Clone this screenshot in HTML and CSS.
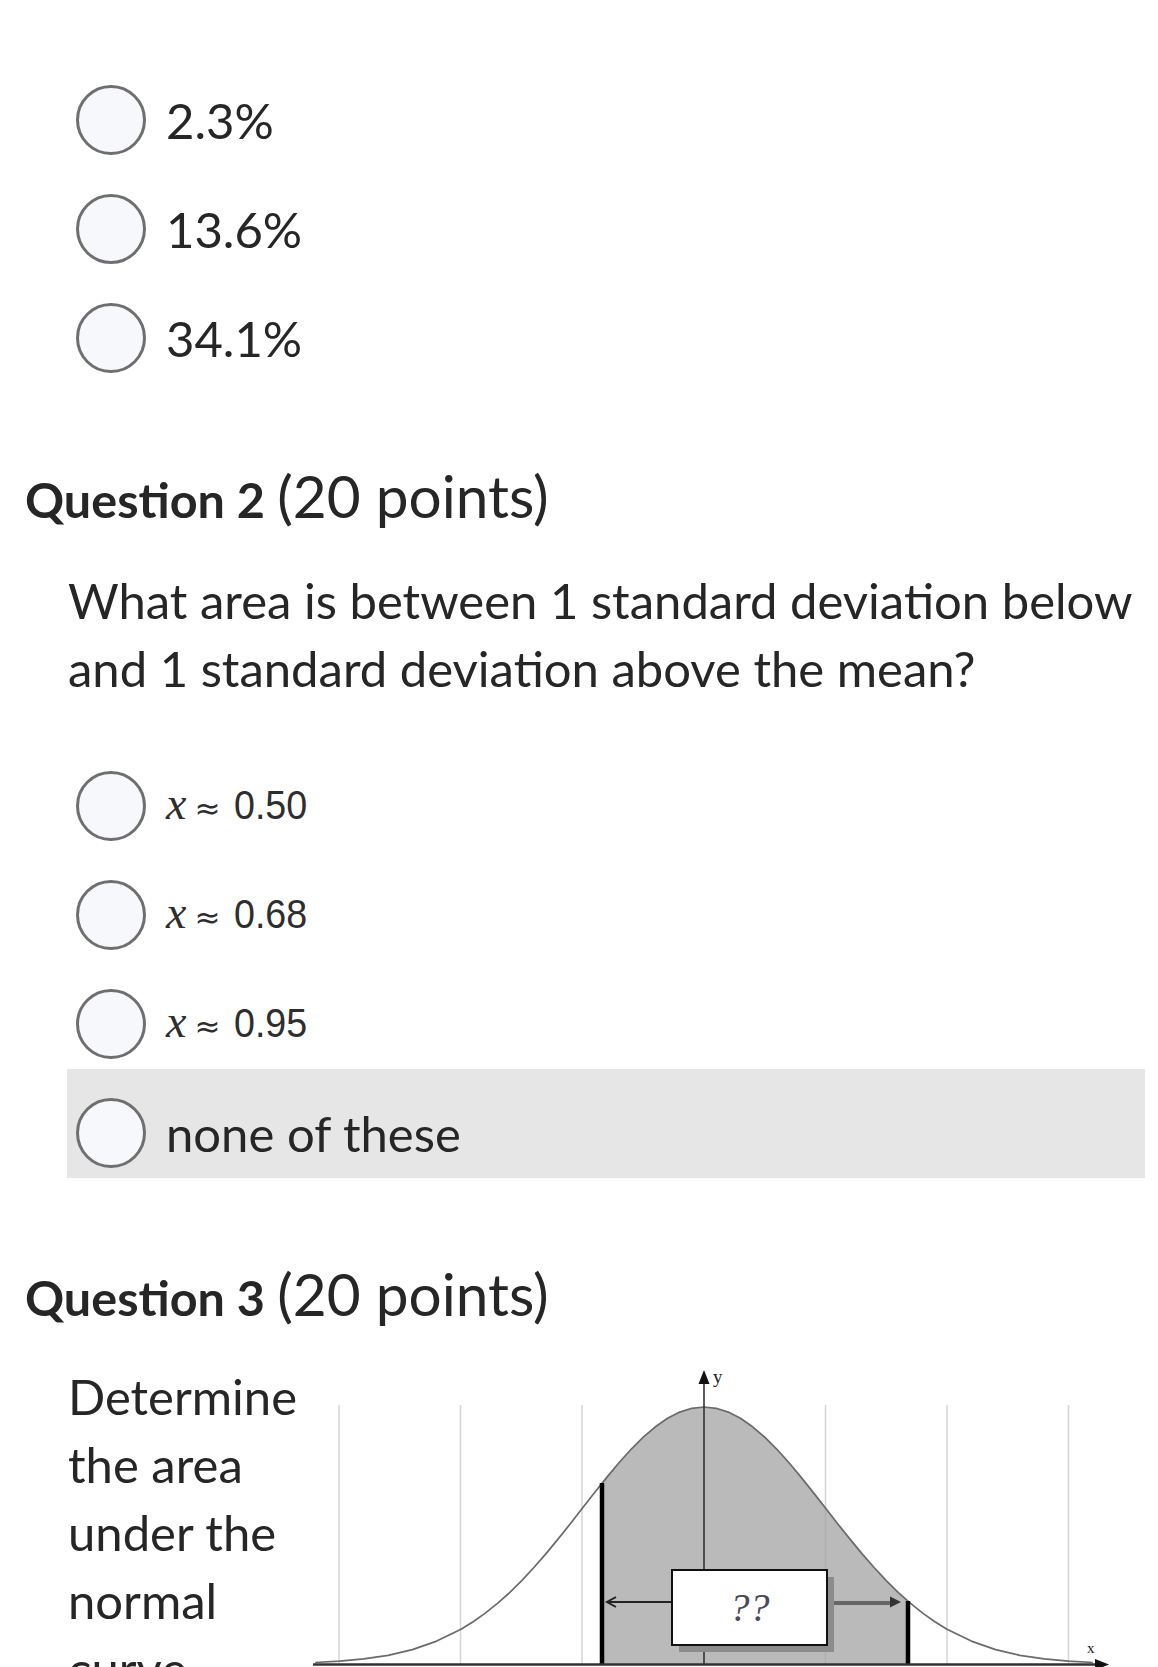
FILE: index.html
```html
<!DOCTYPE html>
<html lang="en">
<head>
<meta charset="utf-8">
<title>Quiz</title>
<link rel="stylesheet" href="styles.css">
</head>
<body>
<div class="page">
  <ul class="options first">
    <li class="option"><span class="radio"></span><span class="label">2.3%</span></li>
    <li class="option"><span class="radio"></span><span class="label">13.6%</span></li>
    <li class="option"><span class="radio"></span><span class="label">34.1%</span></li>
  </ul>

  <section class="question q2">
    <h2 class="q-title"><strong>Question 2</strong> <span class="pts">(20 points)</span></h2>
    <p class="q-text">What area is between 1 standard deviation below and 1 standard deviation above the mean?</p>
    <ul class="options">
      <li class="option"><span class="radio"></span><span class="label math"><i class="var">x</i><span class="approx">≈</span><span class="num">0.50</span></span></li>
      <li class="option"><span class="radio"></span><span class="label math"><i class="var">x</i><span class="approx">≈</span><span class="num">0.68</span></span></li>
      <li class="option"><span class="radio"></span><span class="label math"><i class="var">x</i><span class="approx">≈</span><span class="num">0.95</span></span></li>
      <li class="option hover"><span class="radio"></span><span class="label none">none of these</span></li>
    </ul>
  </section>

  <section class="question q3">
    <h2 class="q-title"><strong>Question 3</strong> <span class="pts">(20 points)</span></h2>
    <div class="q3-body">
      <p class="q-text narrow">Determine the area under the normal curve.</p>
      <svg class="chart" width="820" height="330" viewBox="0 0 820 330" aria-label="Normal curve">
        <g stroke="#d7d7d7" stroke-width="1.6">
          <line x1="31" y1="43" x2="31" y2="302"/>
          <line x1="152.5" y1="43" x2="152.5" y2="302"/>
          <line x1="274" y1="43" x2="274" y2="302"/>
          <line x1="517.5" y1="43" x2="517.5" y2="302"/>
          <line x1="639" y1="43" x2="639" y2="302"/>
          <line x1="760.5" y1="43" x2="760.5" y2="302"/>
        </g>
        <path fill="#bababa" d="M294,302 L294,121.4 L298.8,115.4 L310.95,100.8 L323.1,87.3 L335.25,75.2 L347.4,64.8 L359.55,56.3 L371.7,50.1 L383.85,46.3 L396,45 L408.15,46.3 L420.3,50.1 L432.45,56.3 L444.6,64.8 L456.75,75.2 L468.9,87.3 L481.05,100.8 L493.2,115.4 L505.35,130.6 L517.5,146.1 L529.65,161.7 L541.8,176.9 L553.95,191.6 L566.1,205.5 L578.25,218.6 L590.4,230.6 L600,239.3 L600,302 Z"/>
        <line x1="517.5" y1="146" x2="517.5" y2="302" stroke="#b0b0b0" stroke-width="1.4"/>
        <polyline fill="none" stroke="#6a6a6a" stroke-width="1.7" stroke-linejoin="round" points="7.2,300.5 31.5,299.1 55.8,296.9 80.1,293.3 104.4,287.6 128.7,279.1 153,267.2 165.15,259.7 177.3,251.1 189.45,241.4 201.6,230.6 213.75,218.6 225.9,205.5 238.05,191.6 250.2,176.9 262.35,161.7 274.5,146.1 286.65,130.6 298.8,115.4 310.95,100.8 323.1,87.3 335.25,75.2 347.4,64.8 359.55,56.3 371.7,50.1 383.85,46.3 396,45 408.15,46.3 420.3,50.1 432.45,56.3 444.6,64.8 456.75,75.2 468.9,87.3 481.05,100.8 493.2,115.4 505.35,130.6 517.5,146.1 529.65,161.7 541.8,176.9 553.95,191.6 566.1,205.5 578.25,218.6 590.4,230.6 602.55,241.4 614.7,251.1 626.85,259.7 639,267.2 663.3,279.1 687.6,287.6 711.9,293.3 736.2,296.9 760.5,299.1 784.8,300.5"/>
        <line x1="396" y1="20" x2="396" y2="302" stroke="#333" stroke-width="1.6"/>
        <polygon points="396,8 390.5,22 401.5,22" fill="#111"/>
        <text x="405" y="21" class="axis-label">y</text>
        <line x1="294" y1="121" x2="294" y2="302" stroke="#000" stroke-width="4.5"/>
        <line x1="600" y1="239" x2="600" y2="302" stroke="#000" stroke-width="4.5"/>
        <line x1="300" y1="240" x2="364" y2="240" stroke="#222" stroke-width="2"/>
        <polyline points="308,235 299,240 308,245" fill="none" stroke="#222" stroke-width="2"/>
        <line x1="526" y1="241" x2="584" y2="241" stroke="#666" stroke-width="4"/>
        <polygon points="593,240 582,234.5 582,245.5" fill="#333"/>
        <rect x="371" y="215" width="155" height="75" fill="#8c8c8c"/>
        <rect x="364" y="208" width="155" height="75" fill="#fff" stroke="#111" stroke-width="2"/>
        <text x="441.5" y="259" class="qq" text-anchor="middle">??</text>
        <line x1="5" y1="302.5" x2="790" y2="302.5" stroke="#333" stroke-width="2.5"/>
        <polygon points="801,302.5 787,297 787,308" fill="#111"/>
        <text x="779" y="291" class="axis-label small">x</text>
      </svg>
    </div>
  </section>
</div>
</body>
</html>
```

FILE: styles.css
```css
* {
  box-sizing: border-box;
}

html,
body {
  margin: 0;
  padding: 0;
  background: #ffffff;
}

body {
  font-family: Lato, "Noto Sans", sans-serif;
  color: #262626;
  overflow: hidden;
}

.page {
  width: 1158px;
  height: 1667px;
  overflow: hidden;
  padding: 56px 13px 0 25px;
}

.options {
  list-style: none;
  margin: 0 0 0 42px;
  padding: 0;
}

.option {
  display: flex;
  align-items: flex-start;
  height: 109px;
  padding: 29px 9px 10px;
}

.option.hover {
  background: #e6e6e6;
}

.radio {
  flex: none;
  width: 70px;
  height: 70px;
  border-radius: 50%;
  border: 3px solid #6f6f6f;
  background: #f6f8fc;
}

.label {
  margin-left: 20px;
  font-size: 49px;
  line-height: 70px;
  white-space: nowrap;
}

.label.math {
  display: flex;
  align-items: baseline;
  line-height: 66px;
  color: #2e2e2e;
}

.var {
  font-family: "Liberation Serif", serif;
  font-style: italic;
  font-size: 46px;
}

.approx {
  font-family: "DejaVu Sans", sans-serif;
  font-size: 31px;
  margin-left: 8px;
}

.num {
  font-family: "Liberation Sans", sans-serif;
  font-size: 40px;
  margin-left: 14px;
  transform: scaleX(0.94);
  transform-origin: left bottom;
}

.q-title {
  margin: 81px 0 0;
  font-size: 48.5px;
  line-height: 62px;
  font-weight: 400;
}

.q-title strong {
  font-weight: 700;
}

.q-title .pts {
  font-size: 58.5px;
}

.q3 .q-title {
  margin-top: 84px;
}

.q-text {
  margin: 36px 0 0 43px;
  font-size: 49px;
  line-height: 68px;
}

.q2 .options {
  margin-top: 40px;
}

.q3-body {
  display: flex;
  align-items: flex-start;
  margin: 34px 0 0 43px;
}

.q3-body .q-text.narrow {
  margin: 0;
  width: 240px;
  flex: none;
}

.chart {
  flex: none;
  display: block;
}

.axis-label {
  font-family: "Liberation Serif", serif;
  font-size: 19px;
  fill: #222;
}

.axis-label.small {
  font-size: 15px;
}

.qq {
  font-family: "Liberation Serif", serif;
  font-style: italic;
  font-size: 40px;
  fill: #4a4a5a;
}
```
